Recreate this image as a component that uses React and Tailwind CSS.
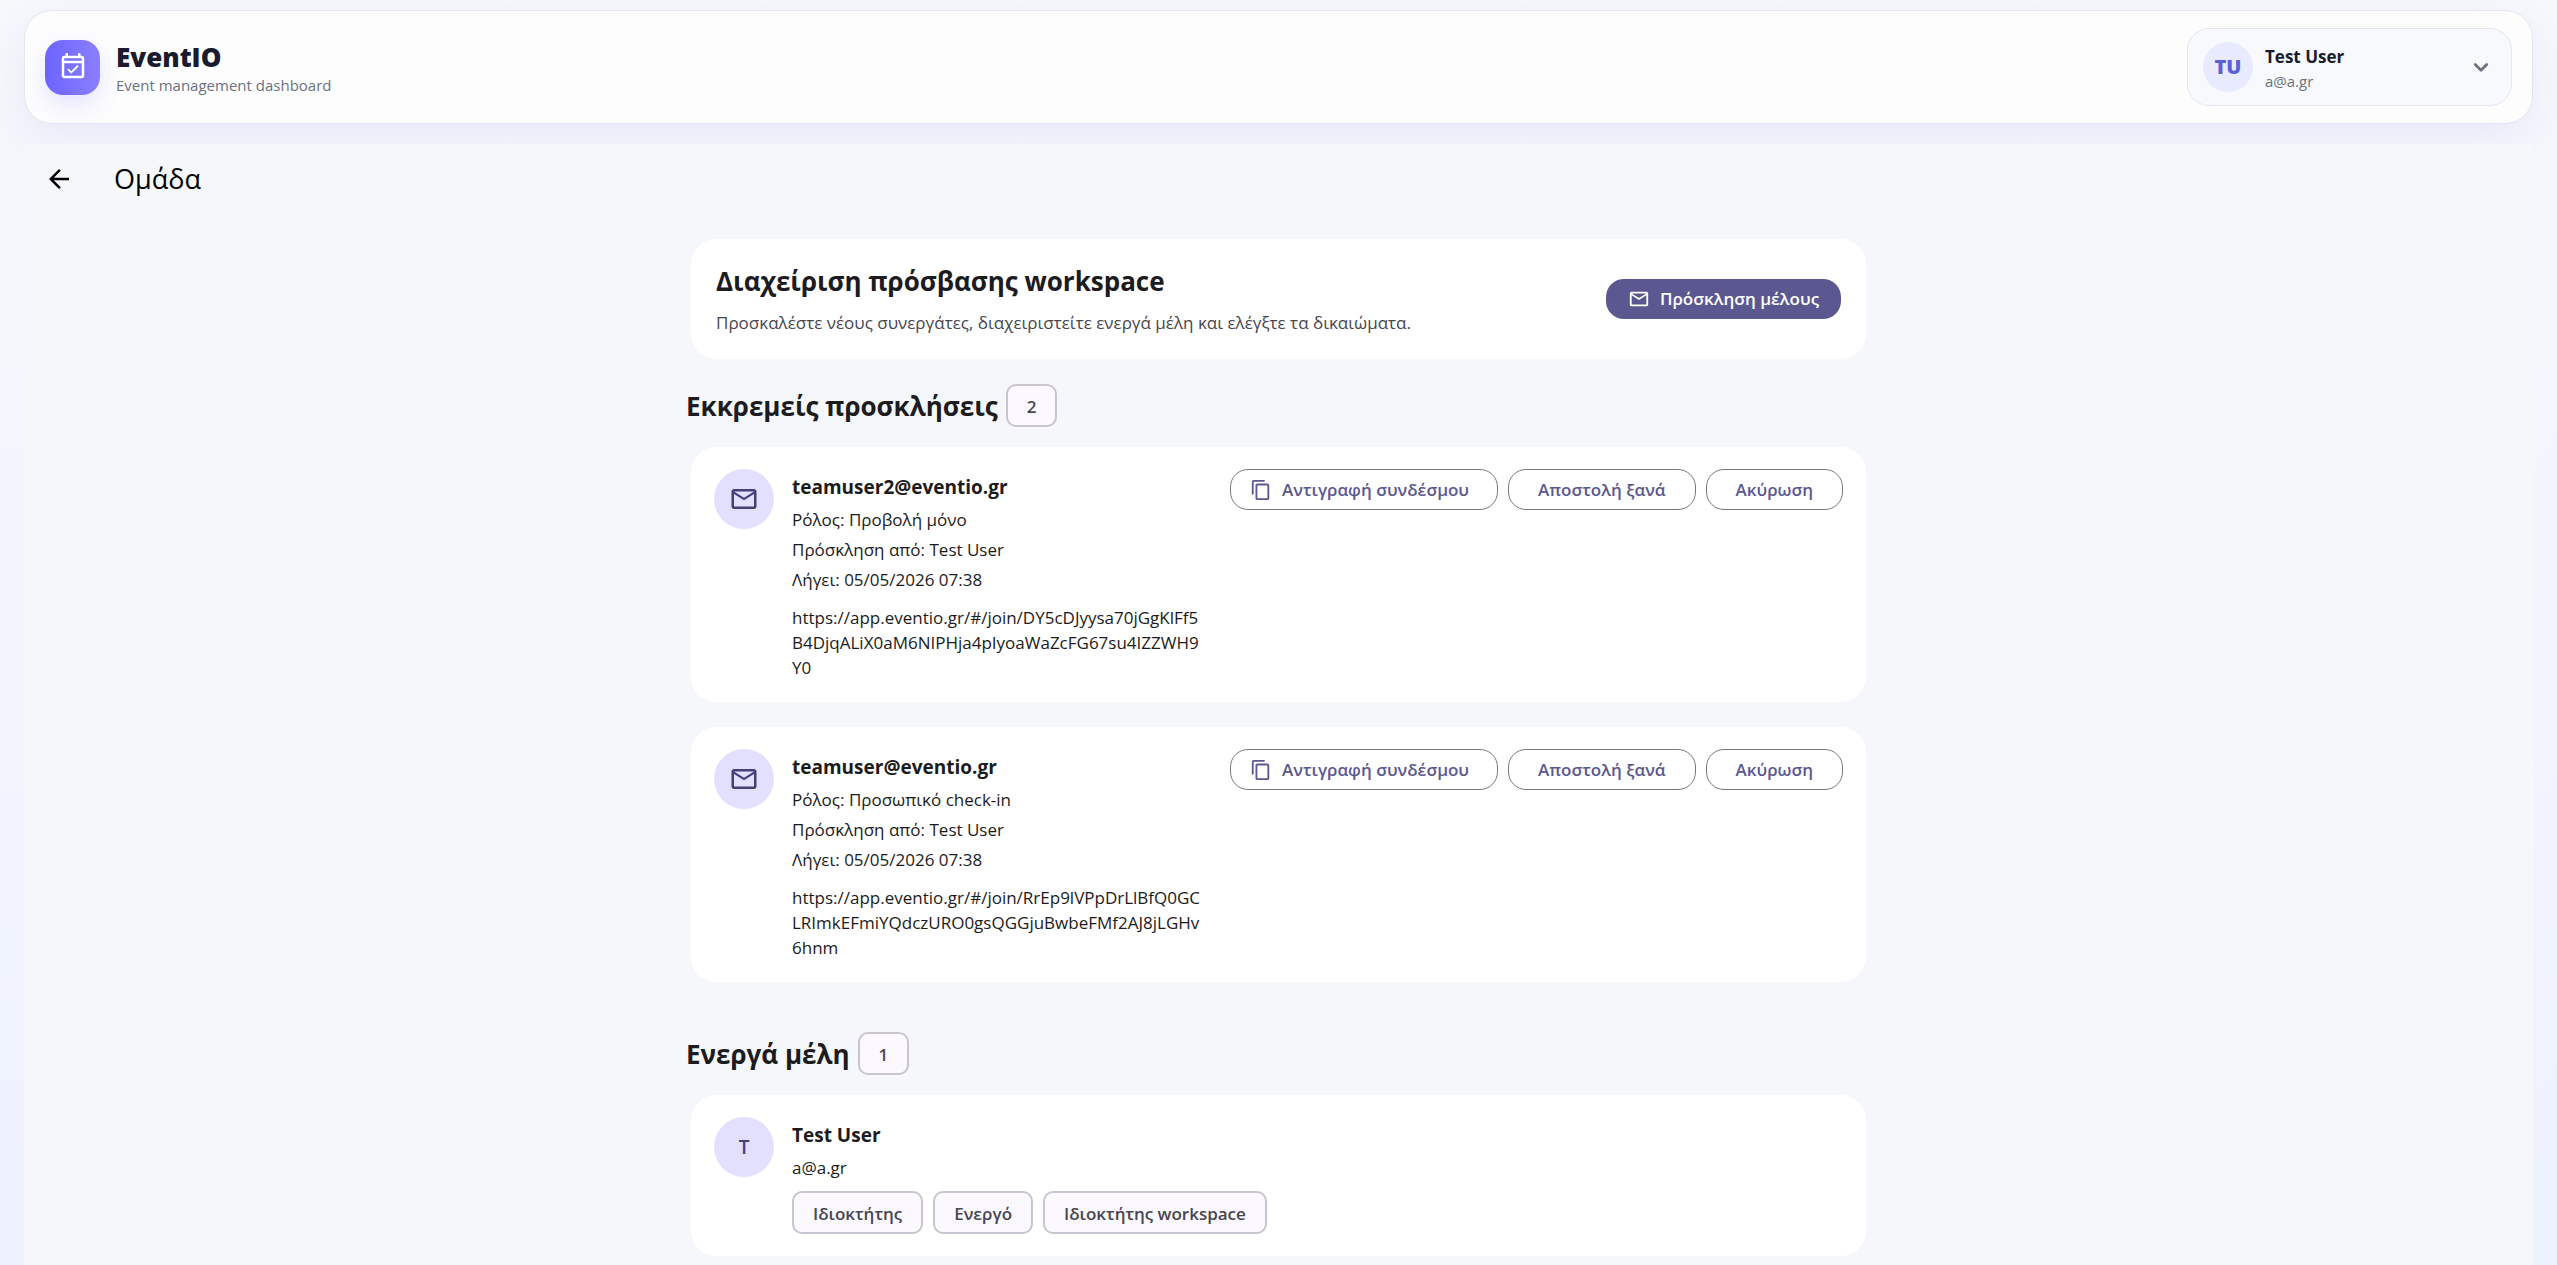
import React from "react";
import {
  MdArrowBack,
  MdMailOutline,
  MdOutlineContentCopy,
  MdOutlineEventAvailable,
} from "react-icons/md";

const invitations = [
  {
    email: "teamuser2@eventio.gr",
    role: "Προβολή μόνο",
    invitedBy: "Test User",
    expires: "05/05/2026 07:38",
    link: "https://app.eventio.gr/#/join/DY5cDJyysa70jGgKlFf5B4DjqALiX0aM6NIPHja4pIyoaWaZcFG67su4IZZWH9Y0",
  },
  {
    email: "teamuser@eventio.gr",
    role: "Προσωπικό check-in",
    invitedBy: "Test User",
    expires: "05/05/2026 07:38",
    link: "https://app.eventio.gr/#/join/RrEp9lVPpDrLlBfQ0GCLRImkEFmiYQdczURO0gsQGGjuBwbeFMf2AJ8jLGHv6hnm",
  },
];

const members = [
  {
    name: "Test User",
    email: "a@a.gr",
    tags: ["Ιδιοκτήτης", "Ενεργό", "Ιδιοκτήτης workspace"],
  },
];

const Chip = ({ children }) => (
  <span className="inline-flex h-[43px] items-center rounded-[10px] border-2 border-[#c9c5d0] bg-[#fcf8ff] px-[19px] pt-[2px] text-[17px] font-semibold text-[#47464f]">
    {children}
  </span>
);

const OutlineButton = ({ icon, children }) => (
  <button
    type="button"
    className={`flex h-[41px] items-center gap-[10px] whitespace-nowrap rounded-[18px] border border-[#78767f] pt-px text-[17px] font-semibold text-[#5b5891] ${
      icon ? "pl-[19px] pr-7" : "px-[29px]"
    }`}
  >
    {icon}
    {children}
  </button>
);

const SectionTitle = ({ title, count }) => (
  <div className="flex items-center gap-2">
    <h2 className="pt-[2px] text-[26px] font-bold text-[#1c1b20]">{title}</h2>
    <Chip>{count}</Chip>
  </div>
);

const Header = () => (
  <header className="mx-6 mt-[10px] flex h-[114px] items-center justify-between rounded-[28px] border border-[#e3e6f3] bg-[#fdfdfe] px-5 shadow-[0_14px_40px_rgba(90,90,200,0.09)]">
    <div className="flex items-center gap-4">
      <div className="flex size-[55px] items-center justify-center rounded-[18px] bg-linear-to-r from-[#6c63ff] to-[#8b7fff] shadow-[0_10px_22px_rgba(108,99,255,0.16)]">
        <MdOutlineEventAvailable className="size-[30px] text-white" />
      </div>
      <div className="pt-1">
        <p className="text-[26px] font-extrabold leading-8 text-[#1a1b2e]">EventIO</p>
        <p className="text-[15px] leading-6 text-[#6b7280]">Event management dashboard</p>
      </div>
    </div>

    {/* Account menu */}
    <button
      type="button"
      className="flex h-[78px] w-[325px] items-center rounded-[22px] border border-[#e3e6f3] bg-[#f8f9fd] px-[15px] text-left"
    >
      <span className="flex size-[50px] items-center justify-center rounded-full bg-[#e8ebff] text-xl font-extrabold text-[#5b5fd8]">
        TU
      </span>
      <span className="ml-3 flex-1 pt-1">
        <span className="block text-[17px] font-bold leading-6 text-[#1a1b2e]">Test User</span>
        <span className="block text-[15px] leading-6 text-[#6b7280]">a@a.gr</span>
      </span>
      <svg
        viewBox="0 0 24 24"
        className="size-[30px] text-[#6b7280]"
        fill="none"
        stroke="currentColor"
        strokeWidth="2.2"
        strokeLinecap="round"
        strokeLinejoin="round"
      >
        <path d="M7.4 10l4.6 4.6 4.6-4.6" />
      </svg>
    </button>
  </header>
);

const InvitationCard = ({ invitation }) => (
  <li className="mx-[5px] flex items-start rounded-[25px] bg-white px-[23px] py-[22px]">
    <div className="flex size-[60px] shrink-0 items-center justify-center rounded-full bg-[#e3dfff]">
      <MdMailOutline className="size-[30px] text-[#434078]" />
    </div>
    <div className="ml-[18px] min-w-0 flex-1 text-[17px] text-[#1c1b20]">
      <h3 className="text-[19px] font-bold leading-9">{invitation.email}</h3>
      <p className="leading-[30px]">Ρόλος: {invitation.role}</p>
      <p className="leading-[30px]">Πρόσκληση από: {invitation.invitedBy}</p>
      <p className="leading-[30px]">Λήγει: {invitation.expires}</p>
      <a href={invitation.link} className="mt-[10px] block max-w-[411px] break-all leading-[25px]">
        {invitation.link}
      </a>
    </div>
    <div className="flex gap-[10px]">
      <OutlineButton icon={<MdOutlineContentCopy className="size-[22px]" />}>
        Αντιγραφή συνδέσμου
      </OutlineButton>
      <OutlineButton>Αποστολή ξανά</OutlineButton>
      <OutlineButton>Ακύρωση</OutlineButton>
    </div>
  </li>
);

const MemberCard = ({ member }) => (
  <li className="mx-[5px] flex items-start rounded-[25px] bg-white px-[23px] py-[22px]">
    <div className="flex size-[60px] shrink-0 items-center justify-center rounded-full bg-[#e3dfff] text-[19px] font-semibold text-[#434078]">
      {member.name[0]}
    </div>
    <div className="ml-[18px] text-[17px] text-[#1c1b20]">
      <h3 className="text-[19px] font-bold leading-9">{member.name}</h3>
      <p className="leading-[30px]">{member.email}</p>
      <div className="mt-2 flex gap-[10px]">
        {member.tags.map((tag) => (
          <Chip key={tag}>{tag}</Chip>
        ))}
      </div>
    </div>
  </li>
);

const App = () => {
  return (
    <div className="flex min-h-screen flex-col overflow-hidden bg-linear-to-b from-[#f7f8fc] to-[#eef2ff] font-['Open_Sans','Noto_Sans',sans-serif]">
      <Header />

      <main className="relative mx-6 mt-5 flex-1 bg-[#f5f7fb] pb-2">
        <div className="flex h-[70px] items-center gap-10 pl-5">
          <button type="button" aria-label="Back">
            <MdArrowBack className="size-[30px] text-black" />
          </button>
          <h1 className="text-[27px] text-black">Ομάδα</h1>
        </div>

        <div className="mx-auto mt-[25px] max-w-[1185px]">
          <section className="mx-[5px] flex h-[120px] items-center justify-between rounded-[25px] bg-white px-[25px]">
            <div className="pt-1">
              <h2 className="text-[26px] font-bold leading-10 text-[#1c1b20]">
                Διαχείριση πρόσβασης workspace
              </h2>
              <p className="mt-1 text-[17px] leading-9 text-[#47464f]">
                Προσκαλέστε νέους συνεργάτες, διαχειριστείτε ενεργά μέλη και ελέγξτε τα δικαιώματα.
              </p>
            </div>
            <button
              type="button"
              className="flex h-10 items-center gap-[10px] whitespace-nowrap rounded-[18px] bg-[#5b5891] px-[22px] text-[17px] font-semibold text-white"
            >
              <MdMailOutline className="size-[22px]" />
              Πρόσκληση μέλους
            </button>
          </section>

          <section className="mt-[25px]">
            <SectionTitle title="Εκκρεμείς προσκλήσεις" count={2} />
            <ul className="mt-5 flex flex-col gap-[25px]">
              {invitations.map((invitation) => (
                <InvitationCard key={invitation.email} invitation={invitation} />
              ))}
            </ul>
          </section>

          <section className="mt-[50px]">
            <SectionTitle title="Ενεργά μέλη" count={1} />
            <ul className="mt-5 flex flex-col gap-[25px]">
              {members.map((member) => (
                <MemberCard key={member.email} member={member} />
              ))}
            </ul>
          </section>
        </div>
      </main>
    </div>
  );
};

export default App;
